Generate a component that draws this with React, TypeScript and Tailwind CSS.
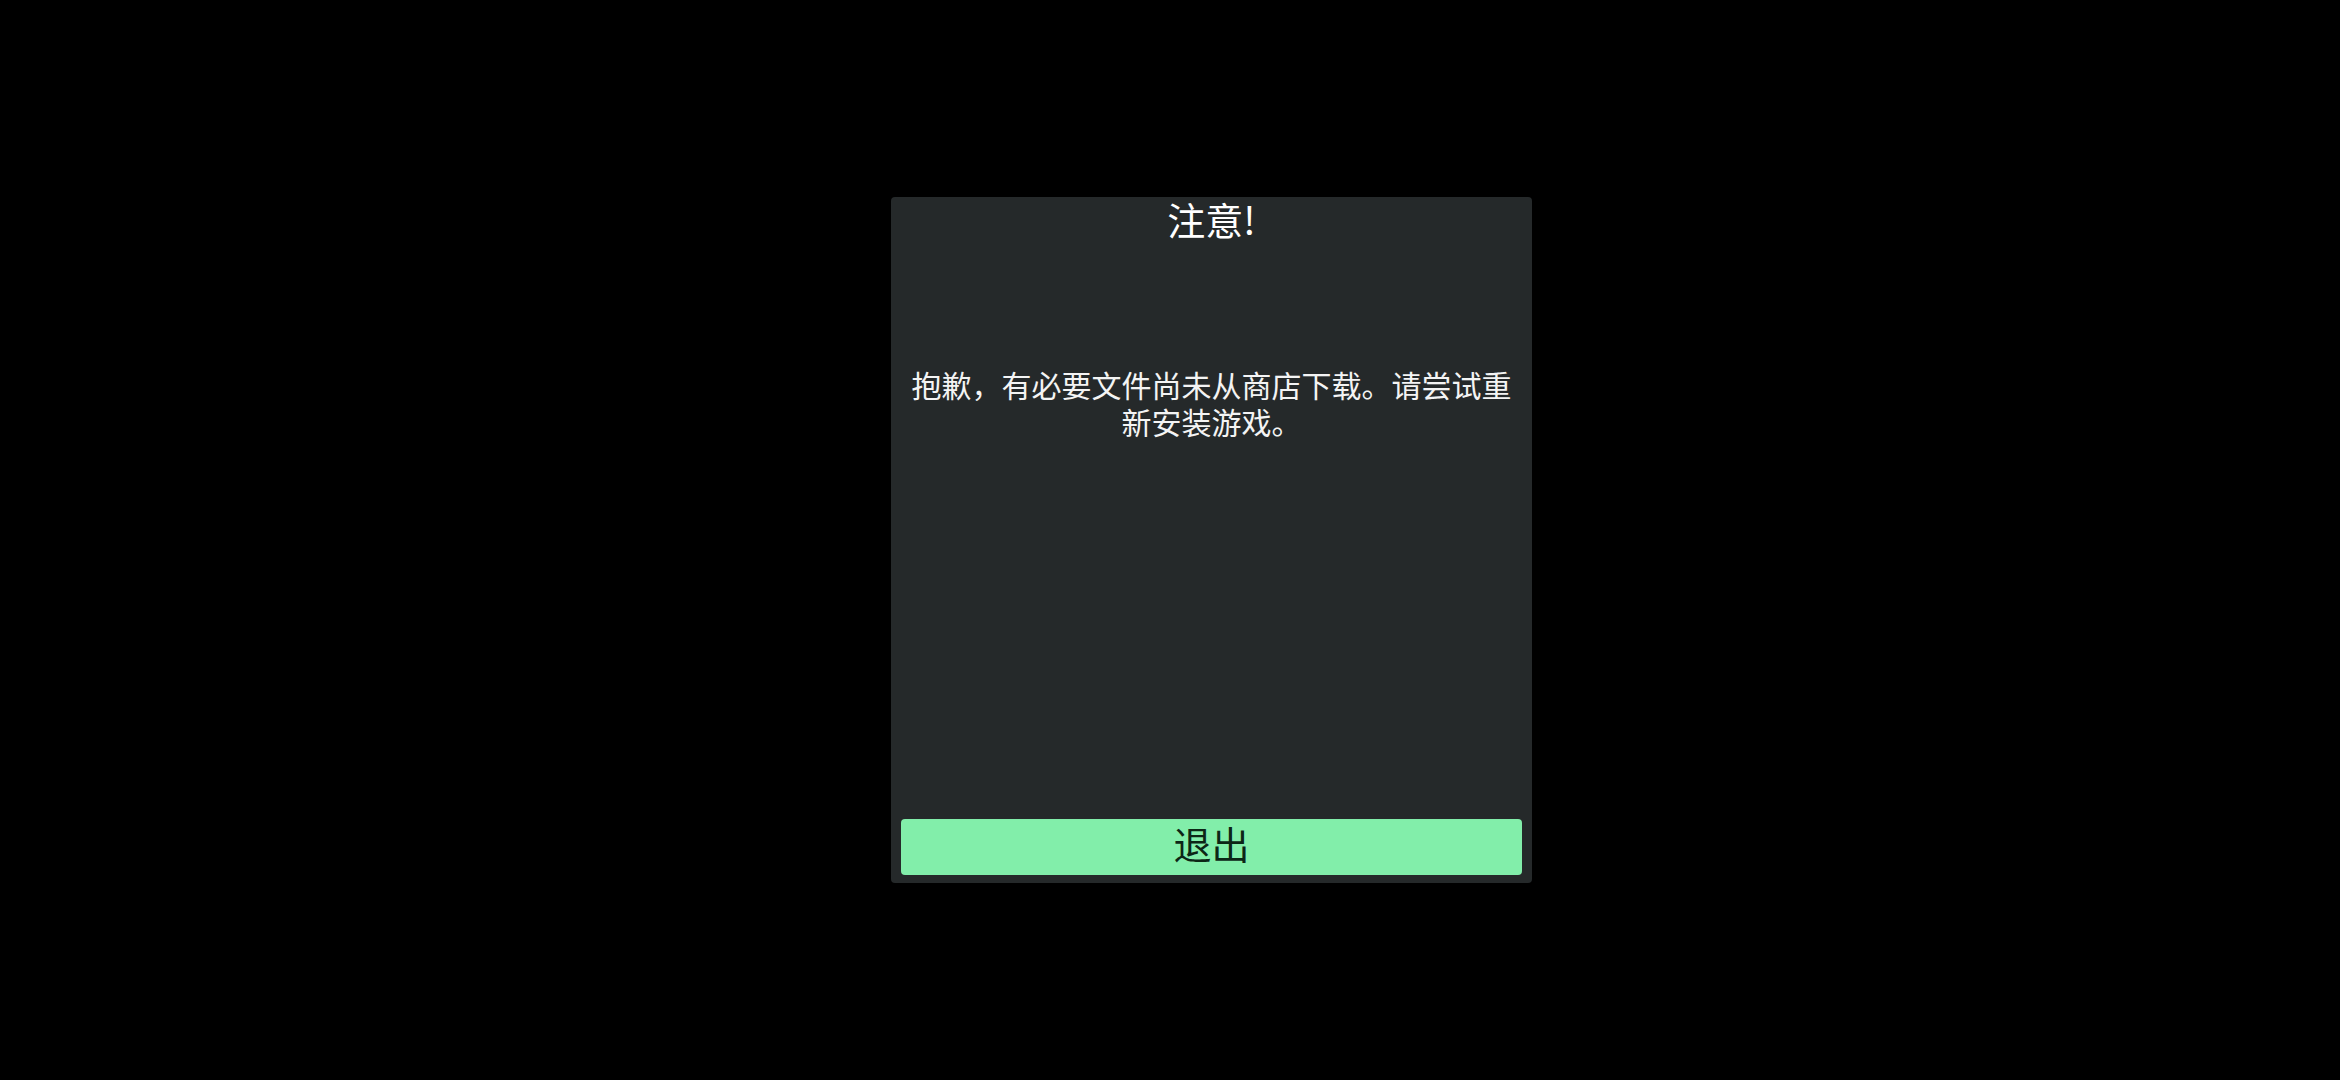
export default function App() {
  return (
    <div
      className="flex h-[1080px] w-full items-center bg-black pl-[891px]"
      style={{ fontFamily: '"Noto Sans CJK SC", "Noto Sans", sans-serif' }}
    >
      <div className="flex h-[686px] w-[641px] flex-col rounded-[4px] bg-[#25292a]">
        <h1 className="text-center text-[38px] leading-[44px] font-normal text-white">注意!</h1>
        <p className="mt-[125px] px-[15px] text-center text-[30px] leading-[37px] text-[#f4f4f4]">
          抱歉，有必要文件尚未从商店下载。请尝试重新安装游戏。
        </p>
        <div className="mx-[10px] mt-auto mb-[8px] h-[56px] cursor-pointer rounded-[4px] bg-[#82eeaa] text-center text-[38px] leading-[48px] text-[#0c2616]">
          退出
        </div>
      </div>
    </div>
  );
}
